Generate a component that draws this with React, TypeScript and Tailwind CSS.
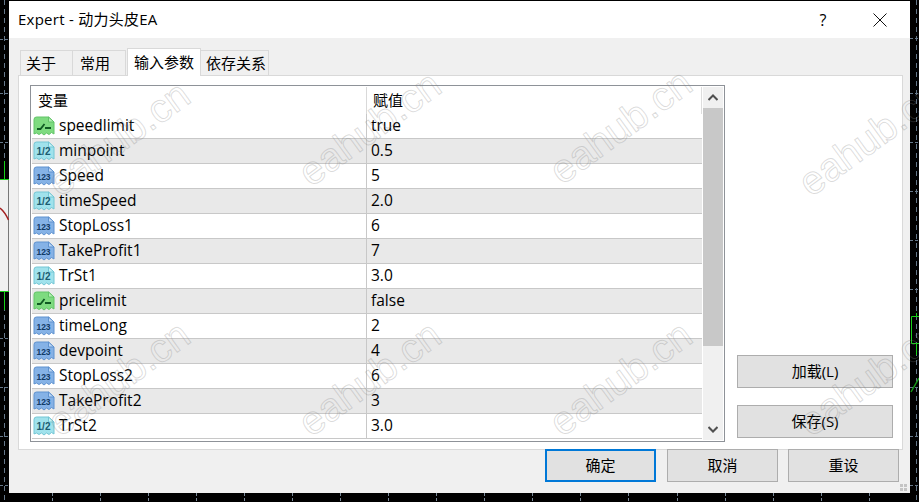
type Kind = "bool" | "dbl" | "int";

const rows: { kind: Kind; name: string; value: string }[] = [
  { kind: "bool", name: "speedlimit", value: "true" },
  { kind: "dbl", name: "minpoint", value: "0.5" },
  { kind: "int", name: "Speed", value: "5" },
  { kind: "dbl", name: "timeSpeed", value: "2.0" },
  { kind: "int", name: "StopLoss1", value: "6" },
  { kind: "int", name: "TakeProfit1", value: "7" },
  { kind: "dbl", name: "TrSt1", value: "3.0" },
  { kind: "bool", name: "pricelimit", value: "false" },
  { kind: "int", name: "timeLong", value: "2" },
  { kind: "int", name: "devpoint", value: "4" },
  { kind: "int", name: "StopLoss2", value: "6" },
  { kind: "int", name: "TakeProfit2", value: "3" },
  { kind: "dbl", name: "TrSt2", value: "3.0" },
];

const marks = [
  "left-[36px] top-[118px]",
  "left-[287px] top-[108px]",
  "left-[538px] top-[106px]",
  "left-[787px] top-[118px]",
  "left-[36px] top-[358px]",
  "left-[287px] top-[358px]",
  "left-[538px] top-[358px]",
  "left-[787px] top-[358px]",
];

const ticks = [52, 100, 148, 196, 244, 292, 340, 388, 436, 484, 532, 580, 628, 677, 725, 773, 821, 869];
const leftMarks = [39, 93, 142, 338, 387, 436, 485];
const rightMarks = [38, 93, 142, 191, 240, 289, 387, 436, 485];

const palette = {
  bool: { fill: "#7edb80", light: "#b5efb5", edge: "#62c468" },
  dbl: { fill: "#a0e2ec", light: "#c8f1f5", edge: "#74c6d4" },
  int: { fill: "#85b2e6", light: "#bcd6f3", edge: "#5f92cf" },
};

function TagIcon({ kind }: { kind: Kind }) {
  const c = palette[kind];
  return (
    <svg width="22" height="21" viewBox="0 0 22 21" className="shrink-0">
      <path
        d="M1 3.5 Q1 1 3.5 1 H15.5 L21 6 V18 L18.5 16.5 L16 18.5 L13.5 17 L11 19 L8.5 17 L6 18.5 L3.5 17 L1 18 Z"
        fill={c.fill}
        stroke={c.edge}
      />
      <path d="M15.5 1 V6 H21 Z" fill={c.light} stroke={c.edge} />
      {kind === "bool" && <path d="M4 13 H7.5 L11.5 8 M12 12 H18" fill="none" stroke="#0f5a22" strokeWidth="1.8" />}
      {kind === "dbl" && (
        <text x="10.5" y="14" textAnchor="middle" fontSize="10" fontWeight="700" fill="#1c5c70" fontFamily="Liberation Sans, sans-serif">
          1/2
        </text>
      )}
      {kind === "int" && (
        <text x="10.5" y="14" textAnchor="middle" fontSize="8.5" fontWeight="700" fill="#123a66" fontFamily="Liberation Sans, sans-serif">
          123
        </text>
      )}
    </svg>
  );
}

function Btn({ label, primary, wide, extra }: { label: string; primary?: boolean; wide?: boolean; extra?: string }) {
  return (
    <button
      className={`${wide ? "w-[156px]" : "w-[111px]"} h-[33px] bg-[#e1e1e1] text-[15px] text-black ${
        primary ? "border-2 border-[#0078d7]" : "border border-[#adadad]"
      } ${extra ?? ""}`}
    >
      {label}
    </button>
  );
}

export default function App() {
  return (
    <div className="relative w-[919px] h-[502px] overflow-hidden bg-black pl-[9px] pt-[1px] font-['Open_Sans','Noto_Sans_CJK_SC',sans-serif] text-black">
      {/* chart behind the dialog */}
      <svg width="919" height="502" className="absolute left-0 top-0">
        <path d="M4.5 0 V502 M916.5 0 V502" stroke="#66788a" strokeDasharray="5 4" />
        {leftMarks.map((y) => (
          <path key={y} d={`M0 ${y}.5 H9`} stroke="#66788a" strokeDasharray="3 2" />
        ))}
        {rightMarks.map((y) => (
          <path key={y} d={`M910 ${y}.5 H919`} stroke="#66788a" strokeDasharray="3 2" />
        ))}
        {ticks.map((x) => (
          <path key={x} d={`M${x}.5 493 V502`} stroke="#7d8c9b" strokeDasharray="3 2" />
        ))}
        <rect x="0" y="180" width="8" height="111" fill="#f0f0f0" />
        <path d="M8.5 180 V291" stroke="#777777" />
        <path d="M4.5 161 V179 M0 179.5 H9 M0 291.5 H9 M4.5 291 V310" stroke="#18d018" fill="none" />
        <path d="M0 208 Q5 212 8.5 220" fill="none" stroke="#a32020" strokeWidth="1.5" />
        <path d="M919 316.5 H911.5 V343.5 H919 M916.5 313 V316 M916.5 344 V355" fill="none" stroke="#18d018" />
        <path d="M911 392 L919 378" fill="none" stroke="#149a14" strokeWidth="1.5" />
      </svg>

      {/* dialog */}
      <div className="relative w-[901px] h-[492px] bg-[#f0f0f0] flex flex-col">
        <div className="h-[37px] bg-white flex items-center pl-[9px] text-[15px] tracking-[0.25px]">
          <span className="flex-1">Expert - 动力头皮EA</span>
          <span className="w-[20px] text-center text-[16px] mr-[40px]">?</span>
          <svg width="14" height="14" viewBox="0 0 14 14" className="mr-[23px]">
            <path d="M0.5 0.5 L13.5 13.5 M13.5 0.5 L0.5 13.5" stroke="#111" fill="none" />
          </svg>
        </div>

        {/* tabs */}
        <div className="ml-[11px] mt-[10px] h-[27px] flex items-end text-[15px] relative z-10">
          <div className="w-[53px] h-[25px] border border-b-0 border-[#d9d9d9] flex items-center pl-[5px]">关于</div>
          <div className="w-[53px] h-[25px] border border-b-0 border-l-0 border-[#d9d9d9] flex items-center pl-[7px]">常用</div>
          <div className="ml-px w-[74px] h-[28px] -mb-px bg-white border border-b-0 border-[#d9d9d9] flex items-center pl-[6px]">输入参数</div>
          <div className="w-[68px] h-[25px] border border-b-0 border-l-0 border-[#d9d9d9] flex items-center pl-[5px]">依存关系</div>
        </div>

        {/* panel */}
        <div className="ml-[9px] w-[885px] h-[375px] bg-white border border-[#d9d9d9] pl-[11px] pt-[9px] flex">
          <div className="w-[695px] h-[357px] border border-[#8e9298] p-px flex">
            <div className="flex-1 min-w-0 overflow-hidden">
              <div className="h-[27px] flex items-center text-[15px] border-r border-[#dddddd]">
                <div className="w-[334px] pl-[6px]">变量</div>
                <div className="flex-1 h-full border-l border-[#d9d9d9] pl-[6px] flex items-center">赋值</div>
              </div>
              {rows.map((r, i) => (
                <div
                  key={r.name}
                  className={`h-[25px] flex items-center text-[15.5px] border-b border-[#c8c8c8] ${i % 2 ? "bg-[#e9e9e9]" : "bg-white"}`}
                >
                  <div className="w-[334px] h-full flex items-center pl-[1px] gap-[4px]">
                    <TagIcon kind={r.kind} />
                    <span>{r.name}</span>
                  </div>
                  <div className="flex-1 h-full border-l border-[#c8c8c8] pl-[4px] flex items-center">{r.value}</div>
                </div>
              ))}
            </div>
            <div className="w-[20px] ml-px shrink-0 bg-[#f0f0f0] flex flex-col">
              <div className="h-[21px] flex items-center justify-center">
                <svg width="10" height="7" viewBox="0 0 10 7">
                  <path d="M0.5 6 L5 1.5 L9.5 6" fill="none" stroke="#505050" strokeWidth="2" />
                </svg>
              </div>
              <div className="h-[238px] bg-[#c8c8c8]" />
              <div className="flex-1 flex items-end justify-center pb-[7px]">
                <svg width="10" height="7" viewBox="0 0 10 7">
                  <path d="M0.5 1 L5 5.5 L9.5 1" fill="none" stroke="#505050" strokeWidth="2" />
                </svg>
              </div>
            </div>
          </div>
          <div className="ml-[12px] pt-[270px] flex flex-col gap-[17px]">
            <Btn label="加载(L)" wide />
            <Btn label="保存(S)" wide />
          </div>
        </div>

        {/* footer buttons */}
        <div className="ml-[536px] flex gap-[10px] -mt-px">
          <Btn label="确定" primary />
          <Btn label="取消" extra="ml-px" />
          <Btn label="重设" />
        </div>

        {/* resize grip */}
        <div className="absolute right-[3px] bottom-[2px] w-[7px] h-[7px] grid grid-cols-2 gap-px">
          <span className="bg-[#c4c4c4]" />
          <span className="bg-[#c4c4c4]" />
          <span className="bg-[#c4c4c4]" />
          <span className="bg-[#c4c4c4]" />
        </div>
      </div>

      {/* watermark */}
      {marks.map((m) => (
        <div
          key={m}
          className={`absolute ${m} -rotate-[36deg] font-['Liberation_Sans',sans-serif] text-[40px] leading-none text-transparent [-webkit-text-stroke:1px_rgba(128,128,128,0.28)] pointer-events-none`}
        >
          eahub.cn
        </div>
      ))}
    </div>
  );
}
